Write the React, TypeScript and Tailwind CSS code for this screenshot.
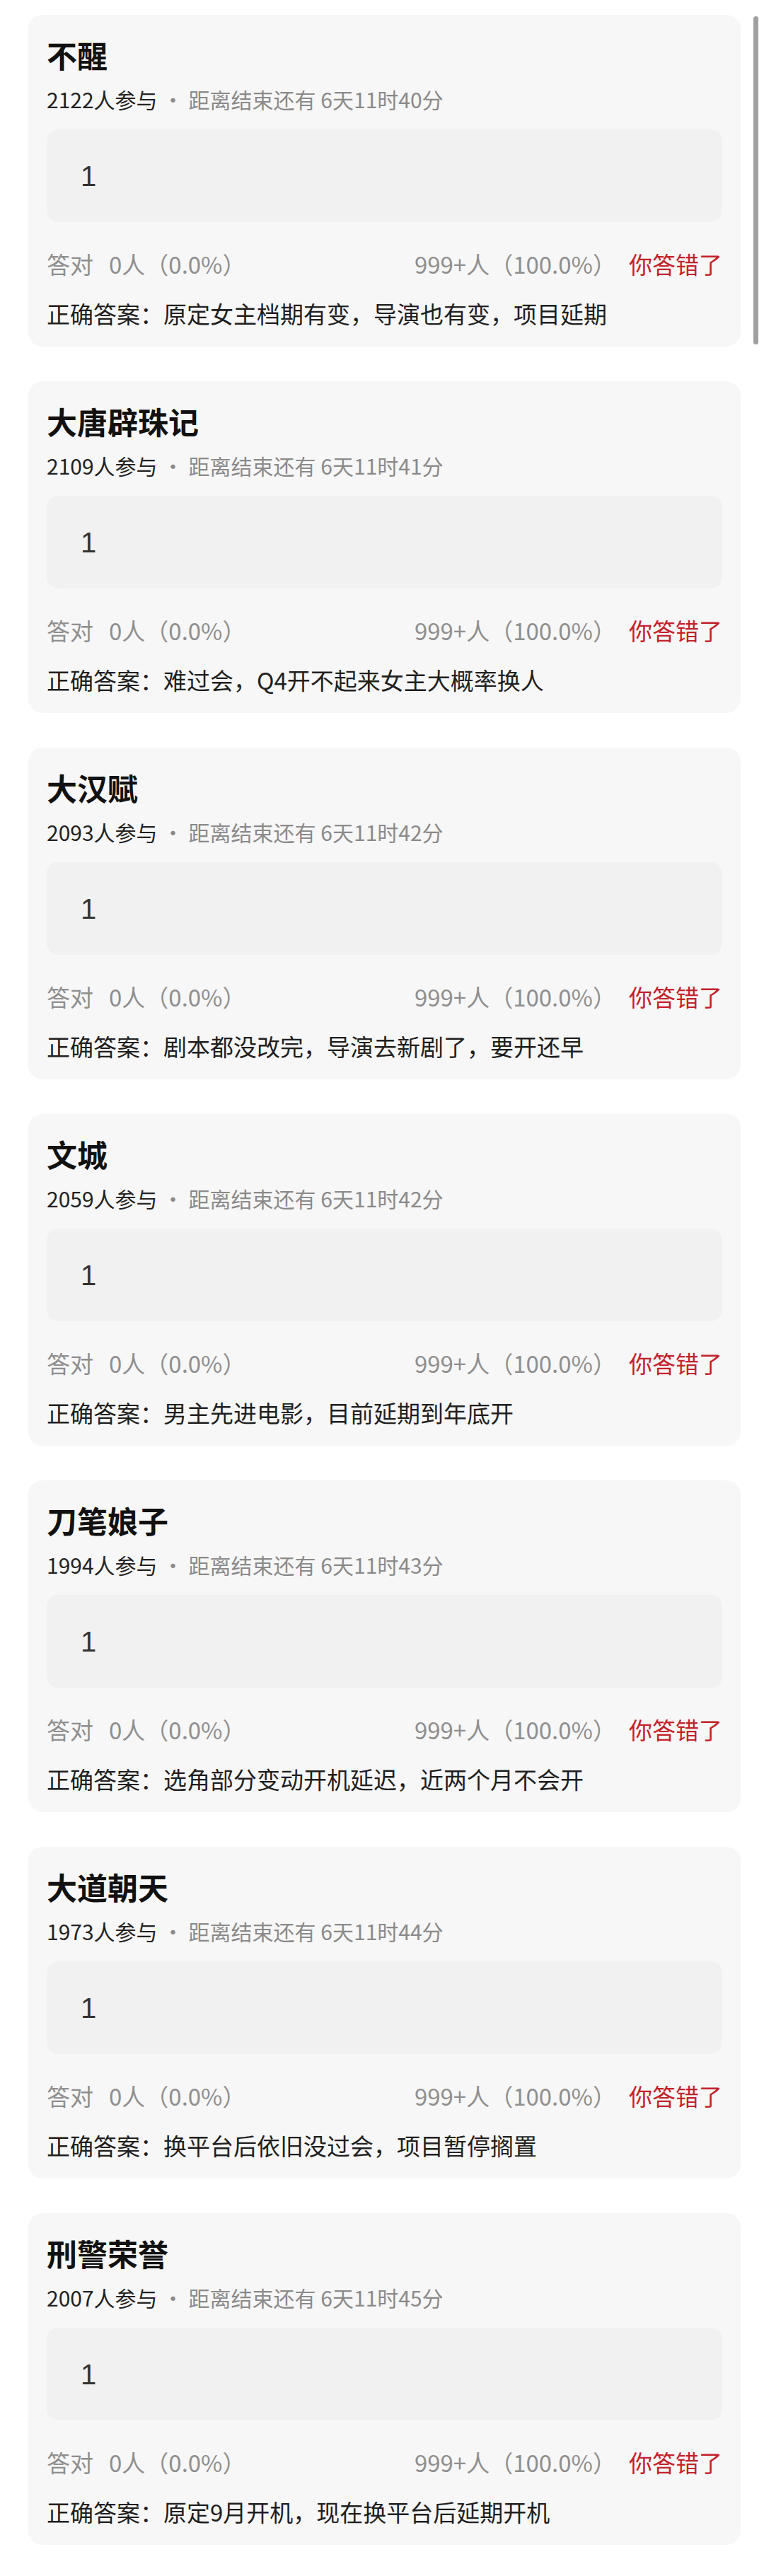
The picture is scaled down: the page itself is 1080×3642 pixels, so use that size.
import React from "react";

interface Question {
  title: string;
  joined: number;
  minutes: number;
  answer: string;
}

const questions: Question[] = [
  { title: "不醒", joined: 2122, minutes: 40, answer: "原定女主档期有变，导演也有变，项目延期" },
  { title: "大唐辟珠记", joined: 2109, minutes: 41, answer: "难过会，Q4开不起来女主大概率换人" },
  { title: "大汉赋", joined: 2093, minutes: 42, answer: "剧本都没改完，导演去新剧了，要开还早" },
  { title: "文城", joined: 2059, minutes: 42, answer: "男主先进电影，目前延期到年底开" },
  { title: "刀笔娘子", joined: 1994, minutes: 43, answer: "选角部分变动开机延迟，近两个月不会开" },
  { title: "大道朝天", joined: 1973, minutes: 44, answer: "换平台后依旧没过会，项目暂停搁置" },
  { title: "刑警荣誉", joined: 2007, minutes: 45, answer: "原定9月开机，现在换平台后延期开机" },
];

const QuestionCard: React.FC<{ q: Question }> = ({ q }) => {
  return (
    <section className="bg-[#f7f7f7] rounded-[20px] px-[26px] pt-[26px] pb-[25px]">
      <h2 className="text-[43px] leading-[60px] font-bold text-[#111]">{q.title}</h2>
      <p className="mt-[13px] text-[30px] leading-[40px] whitespace-nowrap">
        <span className="text-[#222]">{q.joined}人参与</span>
        <span className="text-[#8a8a8a] mx-[7px]">·</span>
        <span className="text-[#8a8a8a]">距离结束还有 6天11时{q.minutes}分</span>
      </p>
      <div className="mt-[23px] h-[131px] bg-[#f1f1f1] rounded-[16px] pl-[48px] flex items-center">
        <span className="text-[40px] leading-none text-[#333] font-['Liberation_Sans',sans-serif]">1</span>
      </div>
      <div className="mt-[37px] flex justify-between items-center text-[33px] leading-[44px]">
        <p className="text-[#8f8f8f]">
          <span>答对</span>
          <span className="ml-[22px]">0人（0.0%）</span>
        </p>
        <p className="flex items-center">
          <span className="text-[#8f8f8f]">999+人（100.0%）</span>
          <span className="ml-[18px] text-[#c3222b]">你答错了</span>
        </p>
      </div>
      <p className="mt-[26px] text-[33px] leading-[44px] text-[#1f1f1f]">
        正确答案：{q.answer}
      </p>
    </section>
  );
};

export default function App() {
  return (
    <div
      className="relative bg-white w-[1080px] min-h-[3642px] pl-[40px] pr-[33px] pt-[21px] pb-[44px]"
      style={{ fontFamily: '"Noto Sans CJK SC", "Noto Sans", sans-serif' }}
    >
      <div className="flex flex-col gap-[49px]">
        {questions.map((q, idx) => (
          <QuestionCard key={idx} q={q} />
        ))}
      </div>
      <div className="absolute left-[1065px] top-[23px] w-[7px] h-[464px] rounded-full bg-[#a0a0a0]" />
    </div>
  );
}
